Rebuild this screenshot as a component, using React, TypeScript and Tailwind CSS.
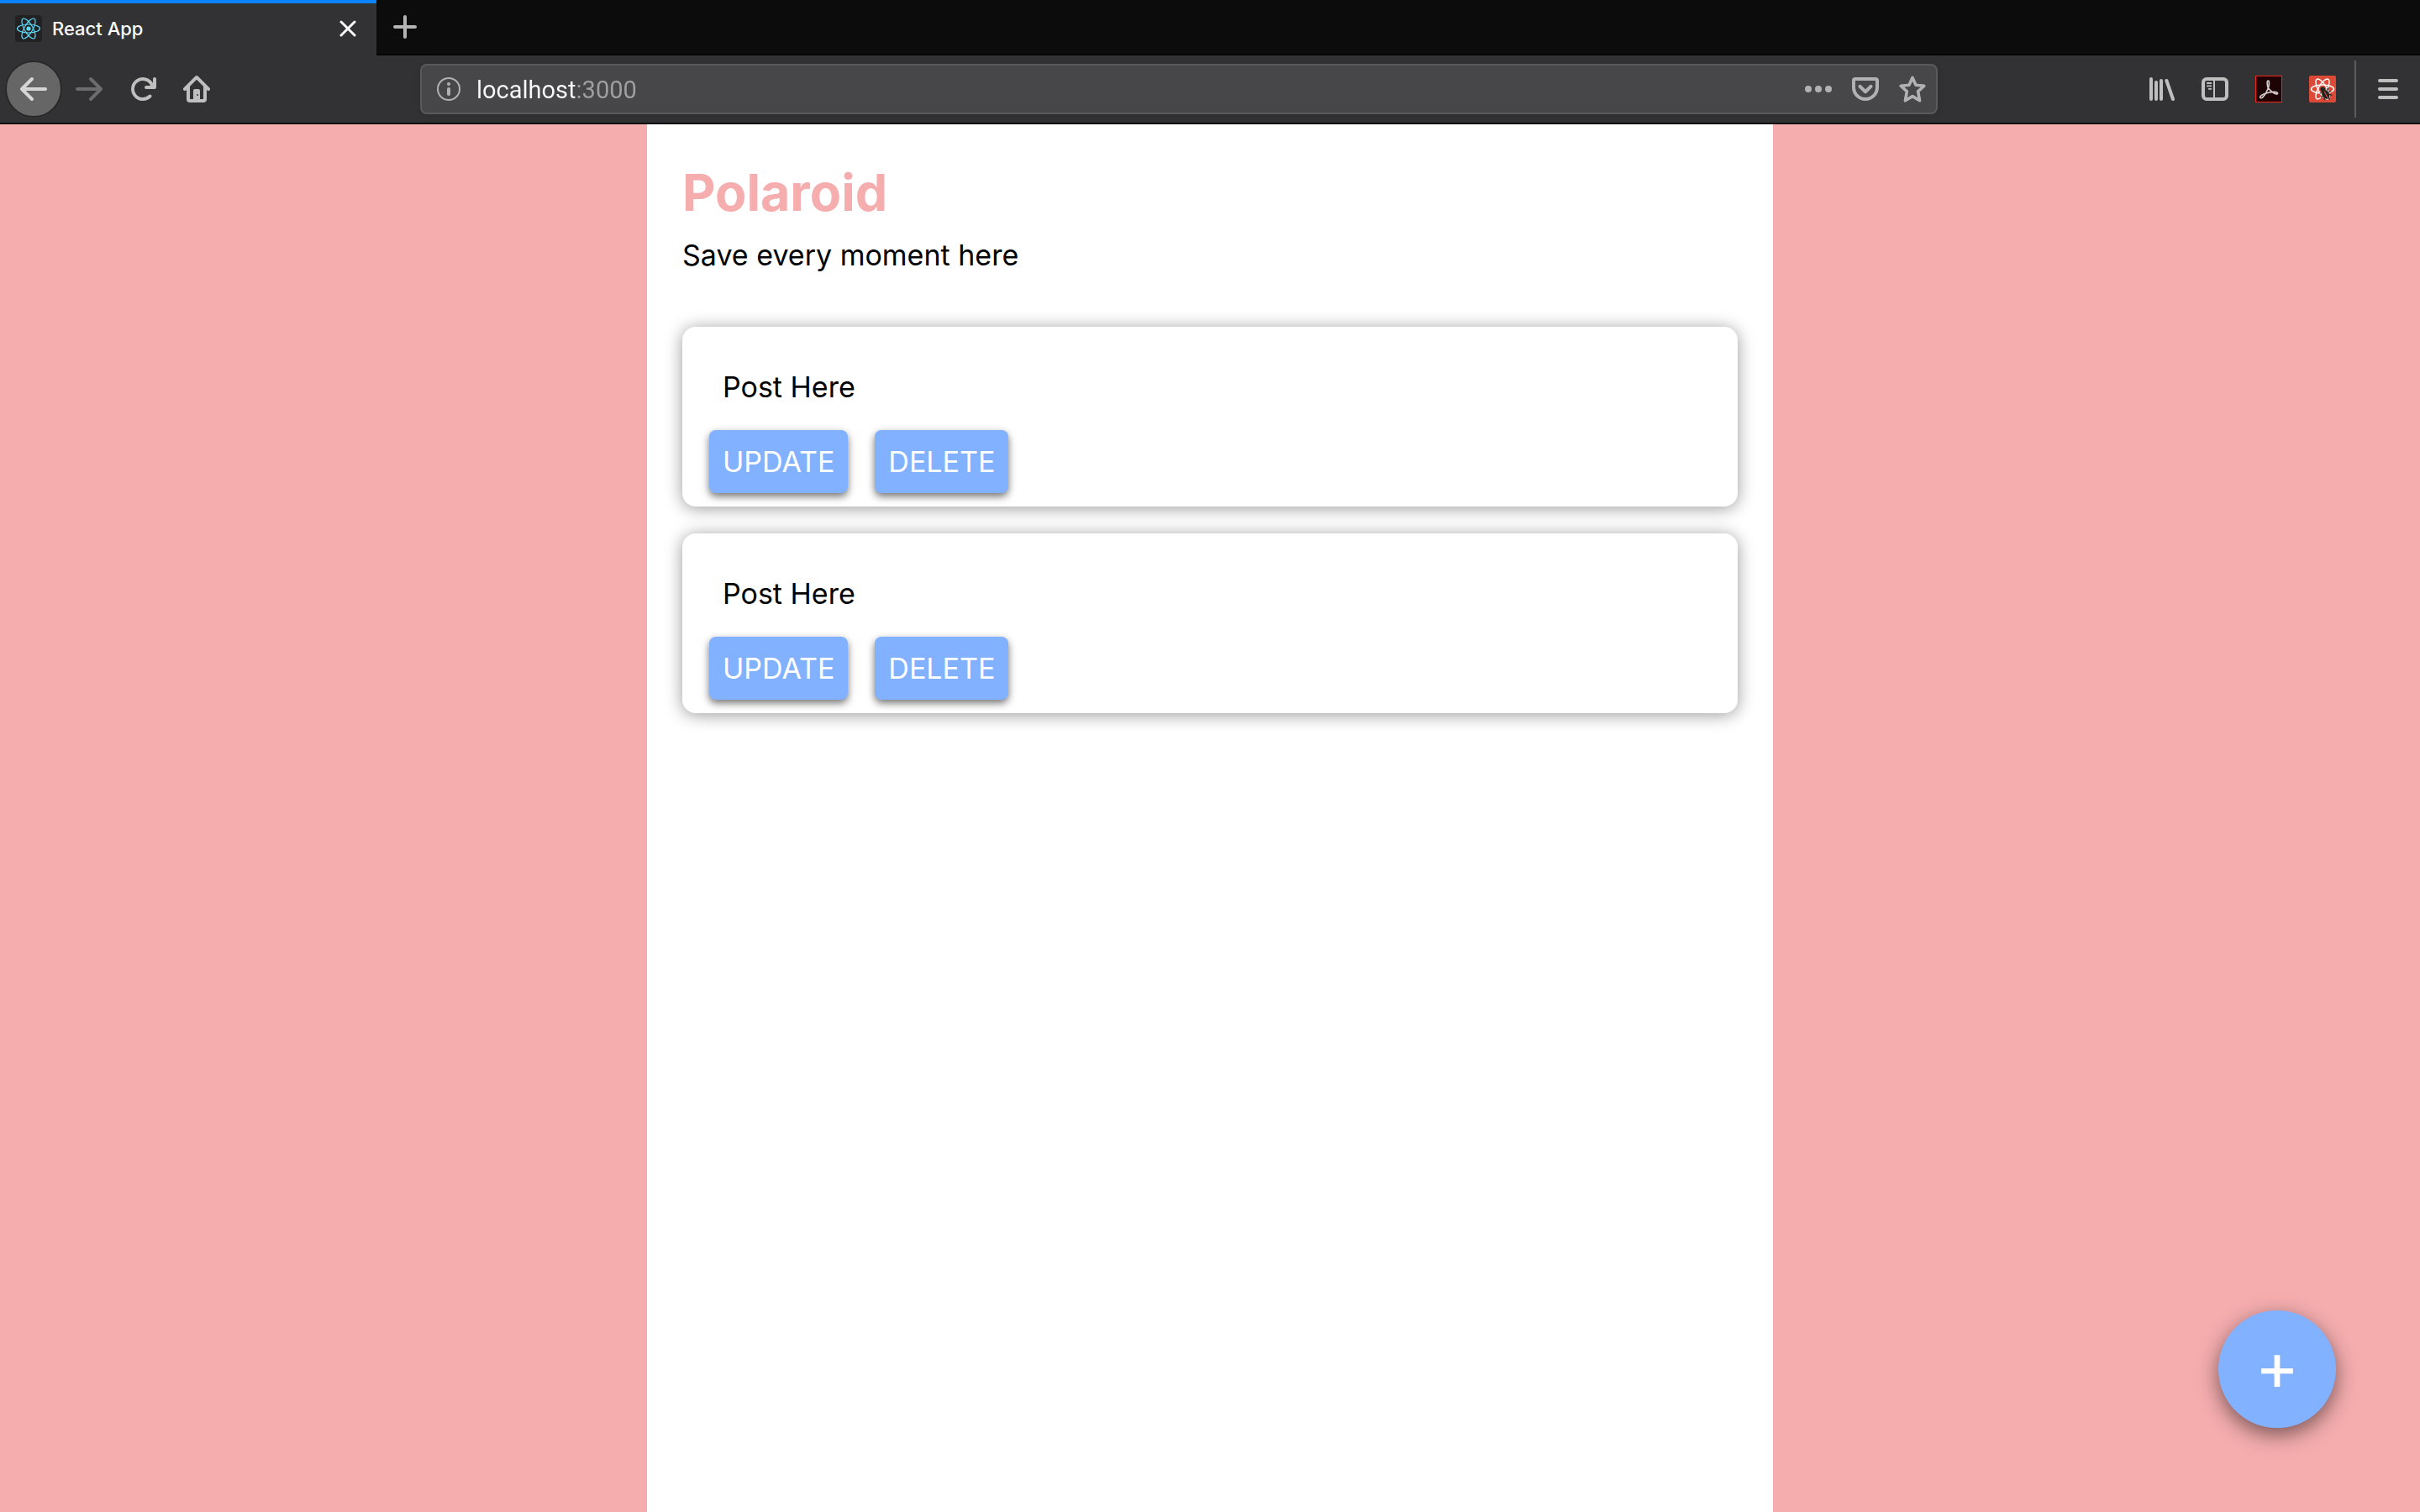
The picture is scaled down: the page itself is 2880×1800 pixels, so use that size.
import React from 'react';

type IconProps = { className?: string };

function Icon({ children, className = 'size-8' }: IconProps & { children: React.ReactNode }) {
  return (
    <svg viewBox="0 0 16 16" fill="currentColor" aria-hidden="true" className={className}>
      {children}
    </svg>
  );
}

const BackIcon = () => (
  <Icon>
    <path d="M15 7H3.414l4.293-4.293a1 1 0 0 0-1.414-1.414l-6 6a1 1 0 0 0 0 1.414l6 6a1 1 0 0 0 1.414-1.414L3.414 9H15a1 1 0 0 0 0-2z" />
  </Icon>
);

const ForwardIcon = () => (
  <Icon>
    <path d="M1 7h11.586L8.293 2.707a1 1 0 0 1 1.414-1.414l6 6a1 1 0 0 1 0 1.414l-6 6a1 1 0 0 1-1.414-1.414L12.586 9H1a1 1 0 0 1 0-2z" />
  </Icon>
);

const ReloadIcon = () => (
  <Icon>
    <path d="M15 1a1 1 0 0 0-1 1v2.418A6.995 6.995 0 1 0 8 15a6.954 6.954 0 0 0 4.95-2.05 1 1 0 0 0-1.414-1.414A5.019 5.019 0 1 1 12.549 6H10a1 1 0 0 0 0 2h5a1 1 0 0 0 1-1V2a1 1 0 0 0-1-1z" />
  </Icon>
);

const HomeIcon = () => (
  <Icon>
    <path
      fillRule="evenodd"
      d="M8 0a1 1 0 0 0-.707.293l-7 7a1 1 0 0 0 1.414 1.414L2 8.414V14a2 2 0 0 0 2 2h8a2 2 0 0 0 2-2V8.414l.293.293a1 1 0 0 0 1.414-1.414l-7-7A1 1 0 0 0 8 0zM4 14V6.414l4-4 4 4V14h-2V9a1 1 0 0 0-1-1H7a1 1 0 0 0-1 1v5H4zM8.5 11a.5.5 0 1 0 0 1 .5.5 0 0 0 0-1z"
    />
  </Icon>
);

const InfoIcon = () => (
  <Icon>
    <circle cx="8" cy="8" r="6.5" fill="none" stroke="currentColor" />
    <circle cx="8" cy="5" r="1" />
    <rect x="7" y="7" width="2" height="5" rx="1" />
  </Icon>
);

const DotsIcon = () => (
  <Icon>
    <circle cx="2" cy="8" r="2" />
    <circle cx="8" cy="8" r="2" />
    <circle cx="14" cy="8" r="2" />
  </Icon>
);

const PocketIcon = () => (
  <Icon>
    <g fill="none" stroke="currentColor" strokeWidth="2" strokeLinecap="round" strokeLinejoin="round">
      <path d="M2 2h12a1 1 0 0 1 1 1v4a7 7 0 0 1-14 0V3a1 1 0 0 1 1-1z" />
      <path d="M4.7 6.4L8 9.6l3.3-3.2" />
    </g>
  </Icon>
);

const StarIcon = () => (
  <Icon>
    <path
      fill="none"
      stroke="currentColor"
      strokeWidth="1.8"
      strokeLinejoin="round"
      d="M8 1.2l2 4.4 4.9.5-3.6 3.3 1 5.5L8 12.3l-4.3 2.6 1-5.5L1.1 6.1 6 5.6z"
    />
  </Icon>
);

const LibraryIcon = () => (
  <Icon>
    <path
      fill="none"
      stroke="currentColor"
      strokeWidth="2"
      strokeLinecap="round"
      d="M2 2v12M5 4v10M8 3v11M11.2 3L15 14"
    />
  </Icon>
);

const SidebarIcon = () => (
  <Icon>
    <rect x="1" y="2" width="14" height="12" rx="2" fill="none" stroke="currentColor" strokeWidth="2" />
    <path fill="none" stroke="currentColor" d="M7.5 3v10" />
    <path fill="none" stroke="currentColor" strokeWidth="0.9" strokeLinecap="round" d="M3.4 4.5h2.3M3.4 6.200h2.3M4.400 7.900h1.300" />
  </Icon>
);

const MenuIcon = () => (
  <Icon>
    <path fill="none" stroke="currentColor" strokeWidth="2" strokeLinecap="round" d="M3 3h10M3 8h10M3 13h10" />
  </Icon>
);

const PdfIcon = () => (
  <svg viewBox="0 0 32 32" className="size-8" aria-hidden="true">
    <rect x="0.5" y="0.5" width="31" height="31" fill="#1d0304" stroke="#fa2317" />
    <path
      fill="none"
      stroke="#d3c9ca"
      strokeWidth="1.7"
      strokeLinejoin="round"
      d="M15.2 14.500c-1.200-3.300-1.500-8.400.1-8.400s1.500 5.400.2 8.400c-1.600 4.200-4.300 9-6.800 11.300-1.800 1.600-3.600.6-2.800-.9 1.100-2 5.200-3.400 9-4.400 4-1 8.900-1.500 10.800-.5 1.700 1 .6 2.200-1.100 1.900-2.600-.5-7.500-4.300-9.400-7.400z"
    />
  </svg>
);

function Orbits({ color, width }: { color: string; width: number }) {
  return (
    <g fill="none" stroke={color} strokeWidth={width}>
      <ellipse cx="16" cy="16" rx="13.5" ry="5" />
      <ellipse cx="16" cy="16" rx="13.5" ry="5" transform="rotate(60 16 16)" />
      <ellipse cx="16" cy="16" rx="13.5" ry="5" transform="rotate(120 16 16)" />
    </g>
  );
}

const ReactFavicon = () => (
  <svg viewBox="0 0 32 32" className="size-8" aria-hidden="true">
    <rect width="32" height="32" rx="4" fill="#222" />
    <Orbits color="#61dafb" width={1.2} />
    <circle cx="16" cy="16" r="2.6" fill="#61dafb" />
  </svg>
);

const ReactDevIcon = () => (
  <svg viewBox="0 0 32 32" className="size-8" aria-hidden="true">
    <rect width="32" height="32" rx="2" fill="#db4a37" />
    <Orbits color="#fff" width={1.5} />
    <g fill="#222" stroke="#222" strokeLinecap="round">
      <circle cx="16.2" cy="16.3" r="2.8" stroke="none" />
      <ellipse cx="19.8" cy="22.500" rx="4.200" ry="5.600" transform="rotate(-32 19.8 22.5)" stroke="none" />
      <path
        strokeWidth="1.2"
        fill="none"
        d="M15.5 20.5l-2.5.5M16.5 23.5l-2 2.5M18.500 26l-.5 2.800M21.500 17.500l1-2.500M23.500 19.500l2.500-1M24.500 22.500l2.500.8M23 26.500l1.500 1.500"
      />
    </g>
    <path d="M18.2 19l4 7.500" stroke="#db4a37" strokeWidth="1.2" />
  </svg>
);

function ToolButton({ label, children, disabled }: { label: string; children: React.ReactNode; disabled?: boolean }) {
  return (
    <button
      type="button"
      aria-label={label}
      disabled={disabled}
      className="flex h-[68px] w-16 shrink-0 items-center justify-center text-[#bfbfc0] disabled:text-[#6c6c6e]"
    >
      {children}
    </button>
  );
}

function TabStrip() {
  return (
    <div className="flex h-[66px] bg-[#0c0c0d]">
      <div className="flex w-[448px] items-center border-t-4 border-[#0a84ff] bg-[#323234] px-[18px] pb-0.5">
        <ReactFavicon />
        <span className="ml-3 flex-1 text-[22px] leading-7 font-medium text-[#f9f9fa]">React App</span>
        <button type="button" aria-label="Close tab" className="flex size-8 items-center justify-center text-[#f9f9fa]">
          <svg viewBox="0 0 20 20" className="size-5" fill="none" stroke="currentColor" strokeWidth="3" strokeLinecap="round" aria-hidden="true">
            <path d="M2 2l16 16M18 2L2 18" />
          </svg>
        </button>
      </div>
      <div className="flex flex-1 border-b-2 border-[#050506] pl-4">
        <button type="button" aria-label="New tab" className="flex w-9 items-center justify-center text-[#b4b4b5]">
          <svg viewBox="0 0 28 28" className="size-7" fill="none" stroke="currentColor" strokeWidth="4" strokeLinecap="round" aria-hidden="true">
            <path d="M14 2v24M2 14h24" />
          </svg>
        </button>
      </div>
    </div>
  );
}

function NavBar() {
  return (
    <div className="flex h-[82px] items-center border-b-2 border-[#0c0c0d] bg-[#323234] px-1.5">
      <button
        type="button"
        aria-label="Back"
        className="flex size-[68px] shrink-0 items-center justify-center rounded-full border-2 border-[#29292a] bg-[#666667] text-[#d6d6d6]"
      >
        <BackIcon />
      </button>
      <ToolButton label="Forward" disabled>
        <ForwardIcon />
      </ToolButton>
      <ToolButton label="Reload">
        <ReloadIcon />
      </ToolButton>
      <ToolButton label="Home">
        <HomeIcon />
      </ToolButton>

      <div className="mx-[234px] flex h-[60px] min-w-0 flex-1 items-center rounded-lg border-2 border-[#59595b] bg-[#474749] pr-3 pl-4 text-[#b1b1b3] shadow-[0_2px_8px_rgba(0,0,0,0.1)]">
        <button type="button" aria-label="Site information" className="shrink-0">
          <InfoIcon />
        </button>
        <input
          type="text"
          aria-label="Address"
          defaultValue="localhost:3000"
          className="ml-[17px] min-w-0 flex-1 bg-[linear-gradient(90deg,#f9f9fa_119px,#a0a0a2_119px)] bg-clip-text pt-0.5 font-['Roboto',sans-serif] text-[29px] leading-9 text-transparent caret-white outline-none"
        />
        <div className="flex shrink-0 gap-6">
          <button type="button" aria-label="Page actions">
            <DotsIcon />
          </button>
          <button type="button" aria-label="Save to Pocket">
            <PocketIcon />
          </button>
          <button type="button" aria-label="Bookmark this page">
            <StarIcon />
          </button>
        </div>
      </div>

      <ToolButton label="Library">
        <LibraryIcon />
      </ToolButton>
      <ToolButton label="Sidebars">
        <SidebarIcon />
      </ToolButton>
      <ToolButton label="Adobe Acrobat">
        <PdfIcon />
      </ToolButton>
      <ToolButton label="React Developer Tools">
        <ReactDevIcon />
      </ToolButton>
      <div className="mx-1.5 h-[68px] w-0.5 shrink-0 bg-[#5b5b5d]" />
      <ToolButton label="Menu">
        <MenuIcon />
      </ToolButton>
    </div>
  );
}

function PostButton({ children }: { children: React.ReactNode }) {
  return (
    <button
      type="button"
      className="rounded-lg bg-[#82b1ff] px-4 py-4 text-[34px] leading-[43px] text-white shadow-[0_4px_10px_rgba(0,0,0,0.55)]"
    >
      {children}
    </button>
  );
}

function Post({ text }: { text: string }) {
  return (
    <article className="rounded-2xl bg-white px-8 pt-[50px] pb-4 shadow-[0_2px_20px_rgba(0,0,0,0.4)]">
      <p className="px-4 text-[34px] leading-[43px]">{text}</p>
      <div className="mt-[30px] flex gap-8">
        <PostButton>UPDATE</PostButton>
        <PostButton>DELETE</PostButton>
      </div>
    </article>
  );
}

export default function App() {
  return (
    <div className="flex min-h-screen flex-col bg-[#f5adae] font-['Inter',sans-serif] text-black">
      <header>
        <TabStrip />
        <NavBar />
      </header>
      <main className="mx-auto w-full max-w-[1340px] flex-1 bg-white px-[42px] pt-[42px]">
        <h1 className="text-[61px] leading-[78px] font-bold text-[#f5adae]">Polaroid</h1>
        <p className="text-[34px] leading-[72px]">Save every moment here</p>
        <section aria-label="Posts" className="mt-[49px] flex flex-col gap-8">
          <Post text="Post Here" />
          <Post text="Post Here" />
        </section>
      </main>
      <button
        type="button"
        aria-label="Add post"
        className="fixed right-[100px] bottom-[100px] flex size-[140px] items-center justify-center rounded-full bg-[#82b1ff] pb-2 text-[80px] leading-none text-white shadow-[0_8px_24px_rgba(0,0,0,0.5)]"
      >
        +
      </button>
    </div>
  );
}
